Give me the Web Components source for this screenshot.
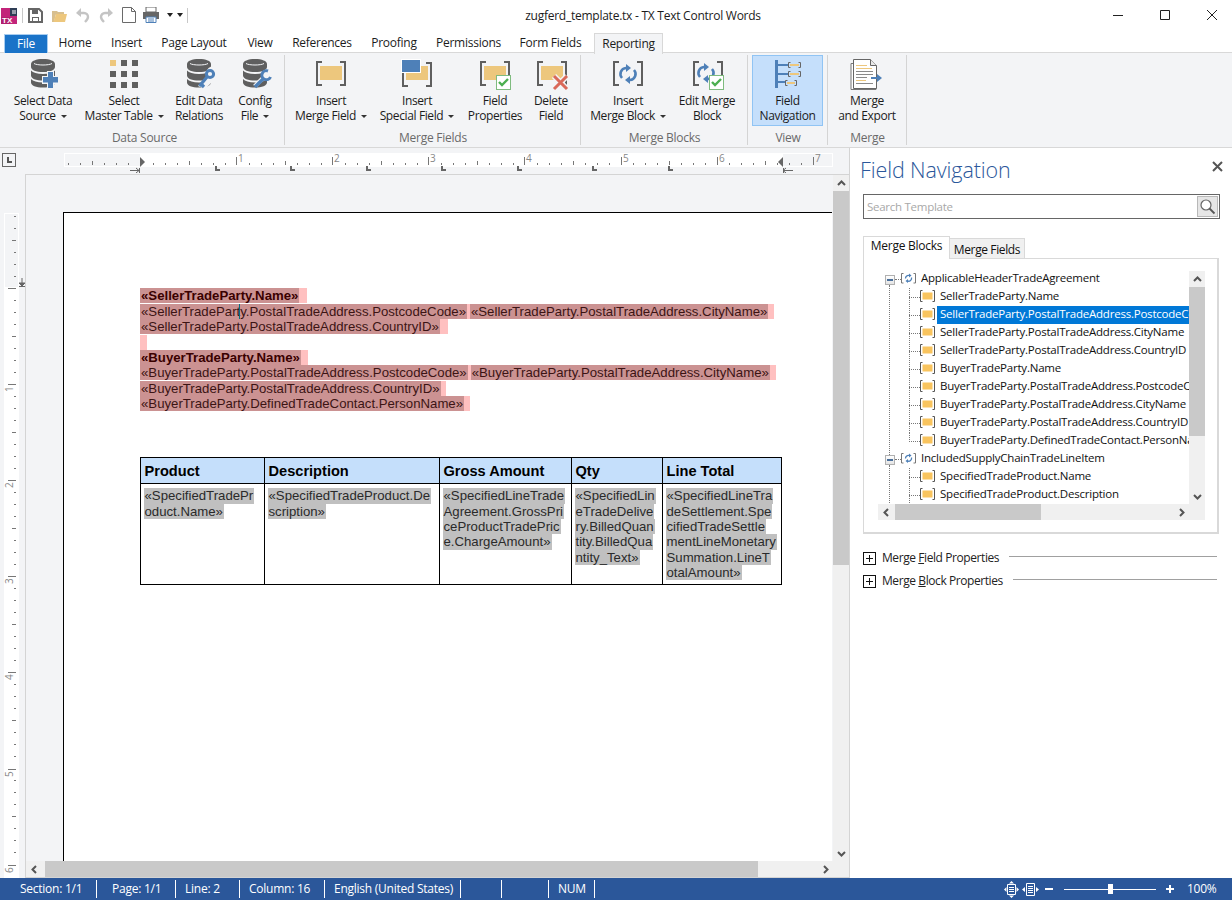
<!DOCTYPE html>
<html lang="en"><head><meta charset="utf-8"><title>TX Text Control Words</title>
<style>
html,body{margin:0;padding:0;background:#fff}
body{width:1232px;height:900px;overflow:hidden;display:flex;flex-direction:column;font:12px/16px "Open Sans","Noto Sans",sans-serif;letter-spacing:-.25px;color:#1c1c1c}
</style></head><body>
<script>
const G='#5f5f5f',Y='#edc77d',B='#4e80b8';
const brk=(x,y,w,h,c=G,s=2,t=5)=>`<path fill="none" stroke="${c}" stroke-width="${s}" d="M${x+t} ${y}H${x}V${y+h}H${x+t}M${x+w-t} ${y}H${x+w}V${y+h}H${x+w-t}"/>`;
const dbBody=`<g fill="${G}"><path d="M0 5c0-3 5-5 12-5s12 2 12 5v3c0 3-5 5-12 5S0 11 0 8z"/><path d="M0 11.500c2 2 6 3.500 12 3.500s10-1.500 12-3.500v5c0 3-5 5-12 5s-12-2-12-5z"/><path d="M0 20c2 2 6 3.500 12 3.500S22 22 24 20v3.500c0 3-5 5-12 5s-12-2-12-5z"/></g><path fill="none" stroke="#f3f4f6" stroke-width="1" d="M3 4.500c3 2 15 2 18 0"/>`;
const db=(inner)=>`<g transform="translate(5 1)">${dbBody}${inner}</g>`;
const check=(x,y)=>`<rect x="${x+.5}" y="${y+.5}" width="14" height="14" fill="#fff" stroke="#7fbb7f"/><path d="M${x+3} ${y+7}l3 3 6-6" fill="none" stroke="#4caf50" stroke-width="2.4"/>`;
const cyc=(cx,cy)=>`<g fill="none" stroke="${B}" stroke-width="2.6"><path d="M${cx-1} ${cy-6}h-1a6 6 0 0 0-4 10"/><path d="M${cx+1} ${cy+6}h1a6 6 0 0 0 4-10"/></g><path fill="${B}" d="M${cx-2} ${cy-10}l5 4-5 4zM${cx+2} ${cy+10}l-5-4 5-4z"/>`;
const ICONS={
 dbplus:db(`<path fill="#f3f4f6" d="M16 12h7v5h5v8h-5v5h-7v-5h-5v-8h5z"/><path fill="${B}" d="M17 13h5v5h5v5.500h-5V29h-5v-5.500h-5V18h5z"/>`),
 grid:[0,1,2].map(r=>[0,1,2].map(c=>`<rect x="${3+c*11}" y="${2+r*11}" width="6" height="6" fill="${r+c?G:Y}"/>`).join('')).join(''),
 dbkey:db(`<path fill="#f3f4f6" d="M11 27l9-10a7 7 0 1 1 7 4l-9 9z"/><g fill="none" stroke="${B}"><circle cx="23" cy="15" r="3.600" stroke-width="3"/><path stroke-width="3.200" d="M20 18l-7.500 9M15 26l2 2"/></g>`),
 dbwrench:db(`<path fill="#f3f4f6" d="M10 26l9-9 1-5 6-3 3 3-2 6-5 2-8 8z"/><path fill="none" stroke="${B}" stroke-width="3.400" d="M12 28l9-9"/><path fill="none" stroke="${B}" stroke-width="3" d="M25 12a4.500 4.500 0 1 0 2.500 6"/>`),
 mfield:`${brk(3,4,28,23)}<rect x="6" y="8" width="22" height="14" fill="${Y}"/>`,
 mspecial:`${brk(3,5,28,23)}<rect x="6" y="8" width="22" height="14" fill="${Y}"/><rect x="1.500" y="1.500" width="19" height="13" fill="${B}" stroke="#fff"/>`,
 mprops:`${brk(3,4,28,23)}<rect x="6" y="8" width="22" height="14" fill="${Y}"/>${check(18,17)}`,
 mdelete:`${brk(4,4,28,23)}<rect x="7" y="8" width="22" height="14" fill="${Y}"/><path stroke="#f3f4f6" stroke-width="6" d="M20 18l13 13M33 18L20 31"/><path stroke="#d9695a" stroke-width="3" d="M20 18l13 13M33 18L20 31"/>`,
 mblock:`${brk(3,4,28,23)}${cyc(17,16)}`,
 mblockedit:`${brk(4,4,28,23)}${cyc(16,15)}${check(19,17)}`,
 nav:`<g transform="translate(-2 0)"><rect x="6" y="2" width="3" height="28" fill="${B}"/><g fill="${B}"><rect x="9" y="6" width="10" height="2"/><rect x="9" y="15" width="10" height="2"/><rect x="9" y="23" width="8" height="2"/></g>${brk(19.500,4.500,12,5,'#666',1,2)}${brk(19.500,13.500,12,5,'#666',1,2)}${brk(16.500,22.500,11,5,'#666',1,2)}<g fill="${Y}"><rect x="21" y="6" width="9" height="2"/><rect x="21" y="15" width="9" height="2"/><rect x="18" y="24" width="8" height="2"/></g></g>`,
 export:`<g transform="translate(-2 0)"><path d="M5.500 3.500h20l5 5v21h-25z" fill="#fff" stroke="#777" transform="translate(-2.500 2)"/><path d="M5.500 1.500h17l6 6v23h-23z" fill="#fff" stroke="#666"/><path d="M22.500 1.500v6h6" fill="#e8e8e8" stroke="#666"/><g stroke-width="1"><path stroke="${Y}" d="M8 7.500h11M8 10.500h16"/><path stroke="#8a8a8a" d="M8 13.500h17M8 16.500h17M8 19.500h11"/><path stroke="${Y}" d="M8 22.500h10"/><path stroke="#8a8a8a" d="M8 25.500h17"/></g><path fill="${B}" d="M23 19h6v-3l5 4-5 4v-3h-6z"/></g>`,
};
class TxBase extends HTMLElement{
  constructor(){super();this.attachShadow({mode:'open'});this.shadowRoot.innerHTML=this.render();}
  render(){return '<slot></slot>'}
}
const def=(n,c)=>customElements.define(n,c);

def('tx-titlebar',class extends TxBase{render(){return `<style>
:host{display:flex;height:30px;align-items:center;position:relative;background:#fff;flex:none}
.qat{display:flex;align-items:center;height:30px;padding-left:1px}
svg{display:block;flex:none}
.title{position:absolute;left:0;right:0;text-align:center;padding-left:54px;top:8px;color:#1c1c1c}
.sep{width:1px;height:15px;background:#c8c8c8;flex:none}
.win{position:absolute;right:-3px;top:0;height:30px;display:flex}
.win div{width:47px;height:30px;display:flex;align-items:center;justify-content:center}
</style>
<div class="qat">
<svg width="16" height="16" viewBox="0 0 16 16" style="margin-top:1px"><path d="M0 0h16v16H0z" fill="#c2247a"/><path d="M9 0h7v8H9z" fill="#2f3d55"/><path d="M0 9h9v7H0z" fill="#b21f6e"/><text x="1" y="15" font-family="Liberation Sans" font-weight="700" font-size="8" fill="#fff" style="letter-spacing:0">TX</text><path d="M11 3h4M11 5h4" stroke="#fff"/></svg>
<span class="sep" style="margin-left:5px"></span>
<svg style="margin-left:5px" width="15" height="15" viewBox="0 0 15 15"><path d="M1 1h10l3 3v10H1z" fill="none" stroke="#666" stroke-width="2"/><path d="M4 1h6v5H4zM4 9h7v5H4z" fill="#666"/><path d="M5 10h5v3H5z" fill="#fff"/></svg>
<svg style="margin-left:9px" width="15" height="13" viewBox="0 0 15 13"><path d="M0 2h5l1 1h6v2H4L2 13H0z" fill="#d8bf8e"/><path d="M4 5h11l-2 8H1.500z" fill="#edc77d"/></svg>
<svg style="margin-left:9px" width="14" height="15" viewBox="0 0 14 15"><path d="M2 5h6a4 4 0 0 1 4 4c0 2-1 3-3 5" fill="none" stroke="#c4c4c4" stroke-width="2.400"/><path d="M5 0v9L0 5z" fill="#c4c4c4"/></svg>
<svg style="margin-left:9px" width="14" height="15" viewBox="0 0 14 15"><path d="M12 5H6a4 4 0 0 0-4 4c0 2 1 3 3 5" fill="none" stroke="#c4c4c4" stroke-width="2.400"/><path d="M9 0v9l5-4z" fill="#c4c4c4"/></svg>
<svg style="margin-left:9px" width="14" height="16" viewBox="0 0 14 16"><path d="M.5.500h9l4 4v11H.5z" fill="#fff" stroke="#6a6a6a"/><path d="M9.500.5v4h4" fill="none" stroke="#6a6a6a"/></svg>
<svg style="margin-left:7px" width="16" height="16" viewBox="0 0 16 16"><path d="M3 0h10v5H3z" fill="#fff" stroke="#666"/><path d="M0 5h16v7h-3v-2H3v2H0z" fill="#666"/><path d="M3 10h10v5.500H3z" fill="#fff" stroke="${B}"/><path d="M5 12h6M5 14h6" stroke="${B}"/></svg>
<svg style="margin-left:7px" width="18" height="5" viewBox="0 0 18 5"><path d="M1 0h6L4 4zM11 0h6l-3 4z" fill="#222"/></svg>
<span class="sep" style="margin-left:3px"></span>
</div>
<div class="title">zugferd_template.tx - TX Text Control Words</div>
<div class="win">
<div><svg width="10" height="10"><path d="M0 5.500h10" stroke="#222"/></svg></div>
<div><svg width="10" height="10"><path d="M.5.500h9v9h-9z" fill="none" stroke="#222"/></svg></div>
<div><svg width="10" height="10"><path d="M0 0l10 10M10 0L0 10" stroke="#222"/></svg></div>
</div>`}});

def('tx-tabs',class extends TxBase{render(){return `<style>
:host{display:flex;height:23px;flex:none;padding-left:4px;box-sizing:border-box;background:linear-gradient(#fff 22px,#d8d8d8 22px);align-items:flex-end}
</style><slot></slot>`}});
def('tx-tab',class extends TxBase{render(){return `<style>
:host{display:flex;align-items:center;justify-content:center;height:19px;box-sizing:border-box;color:#1c1c1c;flex:none;padding-bottom:1px}
:host([file]){background:#1a73c8;color:#fff;border:1px solid #a8cdf0;border-bottom:0}
:host([active]){height:21px;background:#f3f4f6;border:1px solid #d8d8d8;border-bottom:0;margin-left:3px;position:relative;top:1px}
</style><slot></slot>`}});

def('tx-ribbon',class extends TxBase{render(){return `<style>
:host{display:flex;height:95px;flex:none;background:#f3f4f6;box-sizing:border-box;border-bottom:1px solid #d8d8d8;box-shadow:0 1px 0 #e8e8e8}
</style><slot></slot>`}});
def('tx-group',class extends TxBase{render(){return `<style>
:host{display:grid;grid-template-rows:71px 1fr;box-sizing:border-box;padding-top:2px;flex:none;position:relative}
.btns{display:flex}
.lab{text-align:center;color:#6a6a6a;padding-top:4px;line-height:16px;padding-left:var(--lp,0)}
.sep{position:absolute;right:0;top:2px;bottom:2px;width:1px;background:#d4d4d4}
</style><div class="btns" style="padding-left:var(--pl,4px)"><slot></slot></div><div class="lab">${this.getAttribute('label')}</div><div class="sep"></div>`}});
def('tx-rbtn',class extends TxBase{render(){const i=this.getAttribute('icon');return `<style>
:host{display:block;flex:none;box-sizing:border-box;text-align:center;height:71px;position:relative;letter-spacing:-.38px}
:host([on]){background:#c5dffb;border:1px solid #90c4f4}
.ic{height:37px;display:flex;justify-content:center;align-items:flex-start;padding-top:3px;box-sizing:border-box}
:host([on]) .ic{padding-top:2px;height:36px}
svg{display:block;overflow:visible}
.t{line-height:15px;padding-top:1px;white-space:nowrap}
.c{display:${this.hasAttribute('caret')?'inline-block':'none'};width:0;height:0;border:3px solid transparent;border-top:3px solid #333;border-bottom:0;margin-left:5px;vertical-align:2px}
</style><div class="ic"><svg width="34" height="32" viewBox="0 0 34 32">${ICONS[i]}</svg></div>
<div class="t"><slot></slot><span class="c"></span></div>`}});

const inch=96.1;
def('tx-hruler',class extends TxBase{render(){
 let t='';
 for(let i=-6;i<=55;i++){const x=76.5+i*12.01;if(x<2||x>767)continue;
  if(i%8===0)continue;
  t+=`<path d="M${Math.round(x)+.5} ${i%4===0?8:10}v${i%4===0?4:2}" stroke="#777"/>`;}
 for(let n=1;n<=7;n++){const x=Math.round(76+n*inch);t+=`<path d="M${x+.5} 4v8" stroke="#777"/><text x="${x+2}" y="9" font-size="10" fill="#888" font-family="Open Sans">${n}</text>`;}
 let stops='';for(let n=1;n<=7;n++){const x=Math.round(76+n*75.55);stops+=`<path d="M${x-1} 14h2v3h3v2h-5z" fill="#666" transform="translate(0 -1)"/>`;}
 return `<style>:host{display:block;flex:none;width:769px;height:23px}svg{display:block}</style>
 <svg width="769" height="23" viewBox="0 -3 769 23" style="font-family:'Open Sans'">
 <rect x="0" y="0" width="769" height="14" fill="#fff"/><rect x="1" y="1" width="75" height="12" fill="#f3f4f6"/><rect x="719" y="1" width="49" height="12" fill="#f3f4f6"/>
 ${t}${stops}
 <path d="M76 4l5 5-5 5z" fill="#666"/><path d="M719 4l-5 5 5 5z" fill="#666"/>
 <path d="M66 17.500h9M72 15l3 2.500-3 2.500M75.500 15v5M719.500 15v5M720 17.500h9M722 15l-3 2.500 3 2.500" fill="none" stroke="#666"/>
 </svg>`}});
def('tx-vruler',class extends TxBase{render(){
 let t='';const z=75;
 for(let i=-6;i<=50;i++){const y=z+i*12.01;if(y<1||y>662)continue;if(i%8===0&&i!==0)continue;
  const ln=i===0?8:(i%4===0?4:2);
  t+=`<path d="M${16-ln} ${Math.round(y)+.5}h${ln}" stroke="#777"/>`;}
 for(let n=1;n<=6;n++){const y=Math.round(z+n*inch);t+=`<path d="M8 ${y+.5}h8" stroke="#777"/><text transform="translate(13 ${y+8}) rotate(-90)" font-size="10" fill="#888" font-family="Open Sans">${n}</text>`;}
 return `<style>:host{display:block;flex:none}svg{display:block}</style>
 <svg width="25" height="665" viewBox="0 0 25 665">
 <rect x="4" y="0" width="15" height="665" fill="#fff"/><rect x="5" y="1" width="13" height="73" fill="#f3f4f6"/>
 ${t}<path d="M22 65v8M19 70h6l-3 3zM19 73.500h6" stroke="#666" fill="#666"/></svg>`}});

def('tx-scroll',class extends TxBase{render(){const v=this.hasAttribute('v');const s=+this.getAttribute('start'),l=+this.getAttribute('len');
 return `<style>
 :host{display:flex;flex-direction:${v?'column':'row'};background:#f0f0f0;flex:none;box-sizing:border-box;${v?'width:16px':'height:16px'};position:relative}
 .a{${v?'height:16px;width:100%':'width:16px;height:100%'};display:flex;align-items:center;justify-content:center;flex:none}
 .tr{flex:1;min-${v?'height':'width'}:0}
 .th{background:#c9c9c9;${v?`height:${l}px;margin-top:${s}px`:`width:${l}px;height:100%;margin-left:${s}px`}}
 svg{display:block}
 </style><div class="a"><svg width="9" height="9" viewBox="0 0 9 9"><path d="${v?'M1 6l3.500-3.500L8 6':'M6 1L2.500 4.500 6 8'}" fill="none" stroke="#555" stroke-width="2"/></svg></div>
 <div class="tr"><div class="th"></div></div>
 <div class="a"><svg width="9" height="9" viewBox="0 0 9 9"><path d="${v?'M1 3l3.500 3.500L8 3':'M3 1l3.500 3.500L3 8'}" fill="none" stroke="#555" stroke-width="2"/></svg></div>`}});

def('tx-page',class extends TxBase{render(){
 const f=(s)=>`<span class="f">${s}</span>`, e=(w)=>`<span class="e" style="width:${w}px"></span>`;
 const cell=a=>a.map(s=>`<span class="g">${s}</span>`).join('');
 return `<style>
 :host{display:block;background:#fff;border:solid #000;border-width:1px 0 0 1px;box-sizing:border-box;width:769px;flex:1;font:13.2px/15.4px "Liberation Sans",Arial,sans-serif;color:#3c1414;padding:75.4px 0 0 76px;overflow:hidden}
 .l{height:15.4px;white-space:nowrap;letter-spacing:0}
 .f{background:#cb9292;display:inline-block;height:15px;padding:0 1px}
 .b{font-weight:700;color:#3a0000}
 .e{display:inline-block;height:15px;background:#ffc0c0;vertical-align:top}
 .cur{border-left:1px solid #06707f;margin-left:-1px}
 table{border-collapse:collapse;table-layout:fixed;width:642px;margin:45.6px 0 0 0;color:#2a2a2a;font:13.2px/15.4px "Liberation Sans",Arial,sans-serif;letter-spacing:0}
 td,th{border:1px solid #000;padding:3px 0 0 3px;vertical-align:top;text-align:left;overflow:hidden}
 th{background:#c5dffb;height:22px;font-size:14.6px;line-height:20px;font-weight:700;color:#000;padding:3px 0 0 3.500px}
 td{height:96px;padding-top:4px;padding-left:2.500px}
 .g{background:#c0c0c0;display:block;width:max-content;padding:0 1px;height:15.4px}
 </style>
 <div class="l b">${f('«SellerTradeParty.Name»')}${e(8)}</div>
 <div class="l">${f('«SellerTradePart<span class="cur"></span>y.PostalTradeAddress.PostcodeCode»')}${e(3)}${f('«SellerTradeParty.PostalTradeAddress.CityName»')}${e(6)}</div>
 <div class="l">${f('«SellerTradeParty.PostalTradeAddress.CountryID»')}${e(8)}</div>
 <div class="l">${e(7)}</div>
 <div class="l b">${f('«BuyerTradeParty.Name»')}${e(7)}</div>
 <div class="l">${f('«BuyerTradeParty.PostalTradeAddress.PostcodeCode»')}${e(3)}${f('«BuyerTradeParty.PostalTradeAddress.CityName»')}${e(6)}</div>
 <div class="l">${f('«BuyerTradeParty.PostalTradeAddress.CountryID»')}${e(5)}</div>
 <div class="l">${f('«BuyerTradeParty.DefinedTradeContact.PersonName»')}${e(6)}</div>
 <table><colgroup><col style="width:124px"><col style="width:175px"><col style="width:132px"><col style="width:91px"><col style="width:119px"></colgroup>
 <tr><th>Product</th><th>Description</th><th>Gross Amount</th><th>Qty</th><th>Line Total</th></tr>
 <tr><td>${cell(['«SpecifiedTradePr','oduct.Name»'])}</td>
 <td>${cell(['«SpecifiedTradeProduct.De','scription»'])}</td>
 <td>${cell(['«SpecifiedLineTrade','Agreement.GrossPri','ceProductTradePric','e.ChargeAmount»'])}</td>
 <td>${cell(['«SpecifiedLin','eTradeDelive','ry.BilledQuan','tity.BilledQua','ntity_Text»'])}</td>
 <td>${cell(['«SpecifiedLineTra','deSettlement.Spe','cifiedTradeSettle','mentLineMonetary','Summation.LineT','otalAmount»'])}</td></tr>
 </table>`}});

def('tx-editor',class extends TxBase{render(){return `<style>
:host{display:flex;flex-direction:column;width:849px;flex:none;background:#f3f4f6;min-height:0}
.top{display:flex;height:26px;flex:none;padding-top:2px;box-sizing:border-box}
.corner{width:14px;height:14px;box-sizing:border-box;border:1px solid #666;margin:3px 0 0 2px;position:relative;background:#f3f4f6}
.corner:after{content:"";position:absolute;left:4px;top:3px;width:3px;height:4px;border:solid #555;border-width:0 0 2px 2px}
.mid{display:flex;flex:1;min-height:0}
.gut{width:25px;flex:none;padding-top:39px;box-sizing:border-box;overflow:hidden;height:100%}
.doc{flex:1;display:grid;grid-template-columns:1fr 16px;grid-template-rows:1fr 16px;border:solid #d4d4d4;border-width:1px 1px 1px 1px;border-right:0;min-width:0;min-height:0}
.vp{padding:37px 0 0 37px;display:flex;flex-direction:column;overflow:hidden;min-width:0;min-height:0;box-sizing:border-box}
.cn{background:#f0f0f0}
</style>
<div class="top"><div class="corner"></div><div style="margin-left:48px"><slot name="hr"></slot></div></div>
<div class="mid"><div class="gut"><slot name="vr"></slot></div>
<div class="doc"><div class="vp"><slot name="page"></slot></div>
<slot name="vs"></slot><slot name="hs"></slot><div class="cn"></div></div></div>`}});

def('tx-tree-row',class extends TxBase{render(){
 const lv=+this.getAttribute('level'),sel=this.hasAttribute('sel'),last=this.hasAttribute('last');
 const b0=`${brk(.5,1.500,14,9.500,'#777',1,2)}<g fill="none" stroke="${B}" stroke-width="1.300"><path d="M4.500 6.500a3 3 0 0 1 4-3"/><path d="M10.500 5.500a3 3 0 0 1-4 3.500"/></g><path fill="${B}" d="M8 1.500l2.500 2-2.500 2zM7 7l-2.500 2L7 11z"/>`;
 const b1=`${brk(.5,.5,14,11,'#555',1,2)}<rect x="2.500" y="2.500" width="10" height="7" fill="#f9c45e"/>`;
 return `<style>
 :host{display:block;height:18px;position:relative;white-space:nowrap;font-size:11.5px;letter-spacing:-.22px}
 .box{position:absolute;left:7px;top:4px;width:10px;height:10px;box-sizing:border-box;border:1px solid #b0b0b0;background:linear-gradient(#fff,#e4e4e4)}
 .box:after{content:"";position:absolute;left:1px;right:1px;top:3px;height:2px;background:#4a6f9a}
 .h{position:absolute;border-top:1px dotted #777}
 .v{position:absolute;border-left:1px dotted #777}
 svg{position:absolute;top:1px;display:block}
 .t{position:absolute;top:-1px;height:18px;line-height:16px;color:#111;overflow:hidden}
 .s{background:#0078d7;color:#fff}
 </style>${lv===0?`<div class="box"></div><div class="h" style="left:17px;top:8px;width:6px"></div>${this.hasAttribute('stem')?`<div class="v" style="left:11px;top:14px;height:${this.getAttribute('stem')}px"></div>`:''}<svg style="left:23px" width="15" height="13" viewBox="0 0 15 13">${b0}</svg><div class="t" style="left:43px;right:0"><slot></slot></div>`
 :`<div class="v" style="left:31px;top:-1px;height:${last?10:19}px"></div><div class="h" style="left:31px;top:8px;width:11px"></div><svg style="left:42px" width="15" height="13" viewBox="0 0 15 13">${b1}</svg><div class="t ${sel?'s':''}" style="left:59px;right:0;padding-left:3px"><slot></slot></div>`}`}});

def('tx-expander',class extends TxBase{render(){return `<style>
:host{display:flex;align-items:center;height:16px;color:#222;letter-spacing:-.42px}
.b{width:13px;height:13px;box-sizing:border-box;border:1px solid #111;position:relative;flex:none;margin-right:6px}
.b:before{content:"";position:absolute;left:2px;right:2px;top:5px;height:1px;background:#111}
.b:after{content:"";position:absolute;top:2px;bottom:2px;left:5px;width:1px;background:#111}
.ln{flex:1;height:1px;background:#a0a0a0;margin:-4px 0 0 10px}
</style><div class="b"></div><slot></slot><div class="ln"></div>`}});

def('tx-panel',class extends TxBase{render(){return `<style>
:host{flex:1;display:block;background:#fff;border-left:1px solid #d4d4d4;box-sizing:border-box;padding:0 14px 0 13px;position:relative;min-width:0;color:#111}
h2{margin:0 0 0 -3px;padding-top:7px;height:46px;box-sizing:border-box;font:300 21.5px/30px "Open Sans","Noto Sans",sans-serif;color:#2b579a;letter-spacing:-.1px;white-space:nowrap}
.x{position:absolute;left:362px;top:13px}
.search{height:25px;box-sizing:border-box;border:1px solid #666;display:flex;justify-content:space-between;align-items:center;color:#a8a8a8;padding:0 1px 0 3px;width:357px;font-size:11.5px;letter-spacing:-.27px}
.sb{width:21px;height:21px;box-sizing:border-box;border:1px solid #b8b8b8;background:#e6e6e6;display:flex;align-items:center;justify-content:center}
.tabs{display:flex;margin-top:16px;height:23px;align-items:flex-end;position:relative;z-index:1}
.tb{box-sizing:border-box;text-align:center;line-height:18px}
.t1{width:87px;height:23px;background:#fff;border:1px solid #d9d9d9;border-bottom:0;position:relative;top:1px}
.t2{width:75px;height:20px;background:#f0f0f0;border:1px solid #d9d9d9;border-left:0;border-bottom:0;line-height:19px;padding-top:1px;letter-spacing:-.38px}
.box{border:1px solid #d9d9d9;border-width:1px 2px 2px 1px;width:356px;height:276px;box-sizing:border-box;padding:12px 12px 0 14px}
.tree{display:grid;grid-template-columns:311px 16px;grid-template-rows:233px 16px;width:327px;height:249px}
.rows{overflow:hidden}
.ex{margin-top:16px;display:flex;flex-direction:column;gap:7px;width:354px}
</style>
<h2>Field Navigation</h2>
<svg class="x" width="11" height="11" viewBox="0 0 11 11"><path d="M1 1l9 9M10 1L1 10" stroke="#555" stroke-width="2"/></svg>
<div class="search"><span>Search Template</span><div class="sb"><svg width="17" height="17" viewBox="0 0 17 17"><circle cx="7" cy="7" r="5" fill="#fff" stroke="#666" stroke-width="1.200"/><path d="M10.500 10.500l5 5" stroke="#555" stroke-width="1.800"/></svg></div></div>
<div class="tabs"><div class="tb t1">Merge Blocks</div><div class="tb t2">Merge Fields</div></div>
<div class="box"><div class="tree"><div class="rows"><slot name="rows"></slot></div><slot name="vs"></slot><slot name="hs"></slot><div style="background:#f0f0f0"></div></div></div>
<div class="ex"><slot name="ex"></slot></div>`}});

def('tx-status',class extends TxBase{render(){
 const it=[[97,'Section: 1/1',20],[79,'Page: 1/1',15],[64,'Line: 2',9],[85,'Column: 16',9],[136,'English (United States)',9],[41,'',0],[47,'',0],[46,'NUM',9]];
 return `<style>
 :host{display:flex;height:22px;flex:none;background:#2b579a;color:#fff;align-items:center;position:relative}
 .i{box-sizing:border-box;height:18px;border-right:1px solid #fff;line-height:17px;white-space:nowrap;flex:none}
 .r{position:absolute;left:1004px;top:0;height:22px;display:flex;align-items:center}
 svg{display:block;flex:none}
 .sl{width:92px;height:1px;background:#fff;position:relative;margin:0 10px 0 11px}
 .sl i{position:absolute;left:44px;top:-5px;width:5px;height:10px;background:#fff}
 </style>
 ${it.map(([w,t,p])=>`<div class="i" style="width:${w}px;padding-left:${p}px">${t}</div>`).join('')}
 <div class="r">
 <svg width="15" height="17" viewBox="0 0 15 17" fill="#fff"><path d="M0 8.500l2.500-2.500v5zM15 8.500L12.500 6v5zM7.500 0L5 2.500h5zM7.500 17L5 14.500h5z"/><path d="M3.500 3.500h8v10h-8zM5 6.500h5M5 8.500h5M5 10.500h5" fill="none" stroke="#fff"/></svg>
 <svg style="margin-left:3px" width="17" height="13" viewBox="0 0 17 13" fill="#fff"><path d="M0 6.500L3 4v5zM17 6.500L14 4v5z"/><path d="M4.500 .5h8v12h-8zM6 3.500h5M6 5.500h5M6 7.500h5M6 9.500h5" fill="none" stroke="#fff"/></svg>
 <svg style="margin-left:6px" width="8" height="3"><rect width="8" height="2" y="0" fill="#fff"/></svg>
 <div class="sl"><i></i></div>
 <svg width="8" height="8"><path d="M0 3h3V0h2v3h3v2H5v3H3V5H0z" fill="#fff"/></svg>
 <span style="margin-left:13px">100%</span></div>`}});

document.body.innerHTML=`
<tx-titlebar></tx-titlebar>
<tx-tabs>
<tx-tab file style="width:44px">File</tx-tab><tx-tab style="width:54px">Home</tx-tab><tx-tab style="width:49px">Insert</tx-tab><tx-tab style="width:86px">Page Layout</tx-tab><tx-tab style="width:46px">View</tx-tab><tx-tab style="width:78px">References</tx-tab><tx-tab style="width:66px">Proofing</tx-tab><tx-tab style="width:83px">Permissions</tx-tab><tx-tab style="width:81px">Form Fields</tx-tab><tx-tab active style="width:69px">Reporting</tx-tab>
</tx-tabs>
<tx-ribbon>
<tx-group label="Data Source" style="width:285px;--pl:4px;--lp:4px">
 <tx-rbtn icon="dbplus" caret style="width:78px">Select Data<br>Source</tx-rbtn>
 <tx-rbtn icon="grid" caret style="width:84px">Select<br>Master Table</tx-rbtn>
 <tx-rbtn icon="dbkey" style="width:66px">Edit Data<br>Relations</tx-rbtn>
 <tx-rbtn icon="dbwrench" caret style="width:46px">Config<br>File</tx-rbtn>
</tx-group>
<tx-group label="Merge Fields" style="width:296px;--pl:3px">
 <tx-rbtn icon="mfield" caret style="width:86px">Insert<br>Merge Field</tx-rbtn>
 <tx-rbtn icon="mspecial" caret style="width:86px">Insert<br>Special Field</tx-rbtn>
 <tx-rbtn icon="mprops" style="width:70px">Field<br>Properties</tx-rbtn>
 <tx-rbtn icon="mdelete" style="width:42px">Delete<br>Field</tx-rbtn>
</tx-group>
<tx-group label="Merge Blocks" style="width:167px;--pl:3px">
 <tx-rbtn icon="mblock" caret style="width:88px">Insert<br>Merge Block</tx-rbtn>
 <tx-rbtn icon="mblockedit" style="width:70px">Edit Merge<br>Block</tx-rbtn>
</tx-group>
<tx-group label="View" style="width:80px;--pl:4px">
 <tx-rbtn icon="nav" on style="width:71px">Field<br>Navigation</tx-rbtn>
</tx-group>
<tx-group label="Merge" style="width:79px;--pl:4px">
 <tx-rbtn icon="export" style="width:70px">Merge<br>and Export</tx-rbtn>
</tx-group>
</tx-ribbon>
<div style="display:flex;flex:1;min-height:0">
<tx-editor>
 <tx-hruler slot="hr"></tx-hruler>
 <tx-vruler slot="vr"></tx-vruler>
 <tx-page slot="page"></tx-page>
 <tx-scroll slot="vs" v start="0" len="374" style="height:100%"></tx-scroll>
 <tx-scroll slot="hs" start="3" len="713"></tx-scroll>
</tx-editor>
<tx-panel>
 <tx-tree-row slot="rows" level="0" stem="170">ApplicableHeaderTradeAgreement</tx-tree-row>
 <tx-tree-row slot="rows" level="1">SellerTradeParty.Name</tx-tree-row>
 <tx-tree-row slot="rows" level="1" sel>SellerTradeParty.PostalTradeAddress.PostcodeCode</tx-tree-row>
 <tx-tree-row slot="rows" level="1">SellerTradeParty.PostalTradeAddress.CityName</tx-tree-row>
 <tx-tree-row slot="rows" level="1">SellerTradeParty.PostalTradeAddress.CountryID</tx-tree-row>
 <tx-tree-row slot="rows" level="1">BuyerTradeParty.Name</tx-tree-row>
 <tx-tree-row slot="rows" level="1">BuyerTradeParty.PostalTradeAddress.PostcodeCode</tx-tree-row>
 <tx-tree-row slot="rows" level="1">BuyerTradeParty.PostalTradeAddress.CityName</tx-tree-row>
 <tx-tree-row slot="rows" level="1">BuyerTradeParty.PostalTradeAddress.CountryID</tx-tree-row>
 <tx-tree-row slot="rows" level="1" last>BuyerTradeParty.DefinedTradeContact.PersonName</tx-tree-row>
 <tx-tree-row slot="rows" level="0" stem="40">IncludedSupplyChainTradeLineItem</tx-tree-row>
 <tx-tree-row slot="rows" level="1">SpecifiedTradeProduct.Name</tx-tree-row>
 <tx-tree-row slot="rows" level="1">SpecifiedTradeProduct.Description</tx-tree-row>
 <tx-scroll slot="vs" v start="0" len="149"></tx-scroll>
 <tx-scroll slot="hs" start="1" len="146"></tx-scroll>
 <tx-expander slot="ex"><span>Merge <u>F</u>ield Properties</span></tx-expander>
 <tx-expander slot="ex"><span>Merge <u>B</u>lock Properties</span></tx-expander>
</tx-panel>
</div>
<tx-status></tx-status>`;
</script>
</body></html>
